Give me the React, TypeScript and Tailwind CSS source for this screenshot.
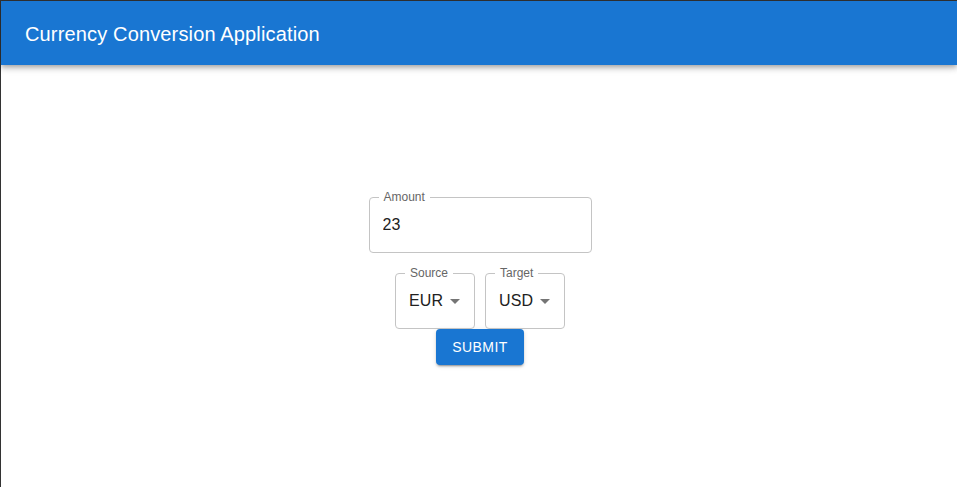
import React, { useState } from "react";

const ArrowDown = () => (
  <svg
    className="absolute right-[7px] top-1/2 -translate-y-1/2 w-6 h-6 pointer-events-none"
    viewBox="0 0 24 24"
    fill="rgba(0,0,0,0.54)"
  >
    <path d="M7 10l5 5 5-5z" />
  </svg>
);

interface SelectBoxProps {
  label: string;
  value: string;
}

const SelectBox = ({ label, value }: SelectBoxProps) => {
  return (
    <div className="relative w-[80px] h-[56px] border border-[#c4c4c4] rounded">
      <span className="absolute left-[9px] top-[-7px] px-[5px] bg-white text-xs leading-[12px] text-[#666]">
        {label}
      </span>
      <div className="h-full flex items-center pl-[13px] text-base tracking-[0.15px] text-[#212121]">
        {value}
      </div>
      <ArrowDown />
    </div>
  );
};

export default function App() {
  const [amount, setAmount] = useState("23");
  return (
    <div className="h-screen border-l border-t border-[#333] bg-white font-['Liberation_Sans',Arial,sans-serif]">
      <header className="h-16 bg-[#1976d2] flex items-center px-6 shadow-[0px_2px_4px_-1px_rgba(0,0,0,0.2),0px_4px_5px_0px_rgba(0,0,0,0.14),0px_1px_10px_0px_rgba(0,0,0,0.12)]">
        <h1 className="text-white text-xl leading-8 pt-[2px] tracking-[0.15px]">
          Currency Conversion Application
        </h1>
      </header>
      <main className="flex flex-col items-center pt-[132px] pl-[2px]">
        <div className="relative w-[223px] h-[56px] border border-[#c4c4c4] rounded">
          <span className="absolute left-[9px] top-[-7px] px-[5px] bg-white text-xs leading-[12px] text-[#666]">
            Amount
          </span>
          <input
            className="w-full h-full px-[13px] bg-transparent outline-none text-base tracking-[0.15px] text-[#212121]"
            value={amount}
            onChange={(e) => setAmount(e.target.value)}
          />
        </div>
        <div className="flex gap-[10px] mt-[20px]">
          <SelectBox label="Source" value="EUR" />
          <SelectBox label="Target" value="USD" />
        </div>
        <button className="w-[88px] h-9 bg-[#1976d2] text-white text-sm uppercase tracking-[0.4px] rounded shadow-[0px_3px_1px_-2px_rgba(0,0,0,0.2),0px_2px_2px_0px_rgba(0,0,0,0.14),0px_1px_5px_0px_rgba(0,0,0,0.12)]">
          Submit
        </button>
      </main>
    </div>
  );
}
